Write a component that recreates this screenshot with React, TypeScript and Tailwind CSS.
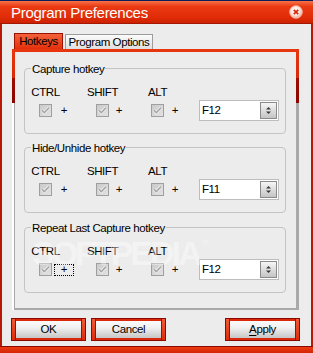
import React from "react";

function Check() {
  return (
    <svg width="13" height="13" viewBox="0 0 13 13" className="block">
      <defs>
        <linearGradient id="cbg" x1="0" y1="0" x2="1" y2="1">
          <stop offset="0" stopColor="#c9c9c9" />
          <stop offset="1" stopColor="#e4e4e4" />
        </linearGradient>
      </defs>
      <rect x="0.5" y="0.5" width="12" height="12" fill="url(#cbg)" stroke="#9f9f9f" />
      <path d="M3 6.3 L5.3 8.7 L10 3.7" fill="none" stroke="#f2f2f2" strokeWidth="3" />
      <path d="M3 6.3 L5.3 8.7 L10 3.7" fill="none" stroke="#a3a3a3" strokeWidth="1.6" />
    </svg>
  );
}

function Unit({ label }: { label: string }) {
  return (
    <div className="flex w-[13px] flex-col items-center">
      <span className="mb-[1px] whitespace-nowrap leading-[14px]">{label}</span>
      <div className="flex h-[21px] items-center">
        <Check />
      </div>
    </div>
  );
}

function Plus({ w, ml, focus }: { w: string; ml: string; focus?: boolean }) {
  return (
    <div className={`flex h-[21px] items-center ${w}`}>
      <span
        className={`flex h-[12px] w-[20px] items-center justify-center border border-dotted leading-none ${
          focus ? "border-black" : "border-transparent"
        } ${ml}`}
      >
        +
      </span>
    </div>
  );
}

function Dropdown({ value }: { value: string }) {
  return (
    <div className="flex h-[21px] w-[80px] items-center justify-between border border-[#bdbdbd] bg-white pl-[2px] pr-[1px]">
      <span className="leading-none">{value}</span>
      <div className="flex h-[17px] w-[17px] items-center justify-center border border-[#8a8a8a] bg-[linear-gradient(to_bottom,#f6f6f6,#c4c4c4)]">
        <svg width="7" height="9" viewBox="0 0 7 9" className="block">
          <path d="M1 3.6 L3.5 1 L6 3.6 Z M1 5.4 L3.5 8 L6 5.4 Z" fill="#3a3a3a" />
        </svg>
      </div>
    </div>
  );
}

function Group({
  title,
  keyName,
  focus,
  className,
}: {
  title: string;
  keyName: string;
  focus?: boolean;
  className: string;
}) {
  return (
    <fieldset className={`ml-[9px] mr-[10px] rounded-[4px] border border-[#c4c4c4] ${className}`}>
      <legend className="ml-[6px] px-[1px] pt-[2px] leading-[13px]">{title}</legend>
      <div className="flex items-end pb-[12px] pl-[14px] pt-[9px]">
        <Unit label="CTRL" />
        <Plus w="w-[44px]" ml="ml-[2px]" focus={focus} />
        <Unit label="SHIFT" />
        <Plus w="w-[42px]" ml="ml-[0px]" />
        <Unit label="ALT" />
        <Plus w="w-[35px]" ml="ml-[1px]" />
        <Dropdown value={keyName} />
      </div>
    </fieldset>
  );
}

function Btn({ children, className = "" }: { children: React.ReactNode; className?: string }) {
  return (
    <div className={`flex h-[23px] w-[75px] border border-[#8a0a00] ${className}`}>
      <span className="w-[4px] border-r border-[#9a1000] bg-[linear-gradient(to_bottom,#f05a36,#dc2c0a)]" />
      <span className="flex flex-1 items-center justify-center border-y-2 border-[#d9280a] bg-[linear-gradient(to_bottom,#fbfbfb,#f0f0f0_40%,#c6c6c6)] leading-none text-black">
        {children}
      </span>
      <span className="w-[4px] border-l border-[#9a1000] bg-[linear-gradient(to_bottom,#f05a36,#dc2c0a)]" />
    </div>
  );
}

export default function App() {
  return (
    <div className="relative flex h-[353px] w-[313px] flex-col overflow-hidden font-['Liberation_Sans',Arial,sans-serif] text-[11.5px] tracking-[-0.4px] text-black">
      <div className="h-[1px] bg-[#0c1f5c]" />
      <div className="flex h-[23px] items-center justify-between border-b border-[#a51800] bg-[linear-gradient(to_bottom,#f77248,#ea3a12_25%,#e02c08_75%,#cc2202)] pl-[11px] pr-[10px]">
        <span className="text-[15px] leading-none tracking-[-0.3px] text-white">Program Preferences</span>
        <svg width="14" height="14" viewBox="0 0 14 14" className="block">
          <defs>
            <radialGradient id="cl" cx="0.45" cy="0.4" r="0.6">
              <stop offset="0" stopColor="#ffffff" />
              <stop offset="0.6" stopColor="#fbe4dc" />
              <stop offset="1" stopColor="#f0a690" />
            </radialGradient>
          </defs>
          <circle cx="7" cy="7" r="6.3" fill="url(#cl)" stroke="#f6c2b2" strokeWidth="0.8" />
          <path d="M4.8 4.8 L9.2 9.2 M9.2 4.8 L4.8 9.2" stroke="#d22a0a" strokeWidth="1.7" />
        </svg>
      </div>

      <div className="flex flex-1 flex-col border-x-2 border-[#b81806] bg-[#ececec]">
        <div className="flex items-end gap-[2px] pl-[12px] pt-[9px]">
          <div className="h-[16px] w-[49px] border border-b-0 border-[#9a1200] bg-[linear-gradient(to_bottom,#f4623a,#e3300c)] text-center leading-[15px]">
            Hotkeys
          </div>
          <div className="h-[15px] w-[88px] border border-b-0 border-[#9c9c9c] bg-[linear-gradient(to_bottom,#fbfbfb,#e0e0e0)] text-center leading-[14px]">
            Program Options
          </div>
        </div>

        <div className="ml-[10px] w-[287px] bg-[linear-gradient(to_bottom,#e8360f_0px,#d82a0a_29px,#9e0c02_29px,#8a0600_54px,transparent_54px),linear-gradient(to_right,#ffffff_2px,#a9a9a9_2px)] px-[3px] pb-[2px] pt-[3px]">
          <div className="flex flex-col bg-[#ececec] pb-[15px] pt-[9px]">
            <Group title="Capture hotkey" keyName="F12" className="" />
            <Group title="Hide/Unhide hotkey" keyName="F11" className="mt-[6px]" />
            <Group title="Repeat Last Capture hotkey" keyName="F12" focus className="mt-[7px]" />
          </div>
        </div>

        <div className="mt-[8px] flex pl-[9px] pr-[11px]">
          <Btn>OK</Btn>
          <Btn className="ml-[5px]">Cancel</Btn>
          <Btn className="ml-auto">
            <span>
              <span className="underline underline-offset-[2px]">A</span>pply
            </span>
          </Btn>
        </div>
      </div>

      <div className="h-[7px] border-t border-[#8a0800] bg-[linear-gradient(to_bottom,#ea3a12,#d42606)]" />

      <div className="pointer-events-none absolute left-[32px] top-[236px] flex items-start text-[34px] font-bold leading-none tracking-[-3px] text-white/40">
        SOFTPEDIA
        <span className="ml-[3px] mt-[3px] text-[9px] tracking-normal">®</span>
      </div>
    </div>
  );
}
